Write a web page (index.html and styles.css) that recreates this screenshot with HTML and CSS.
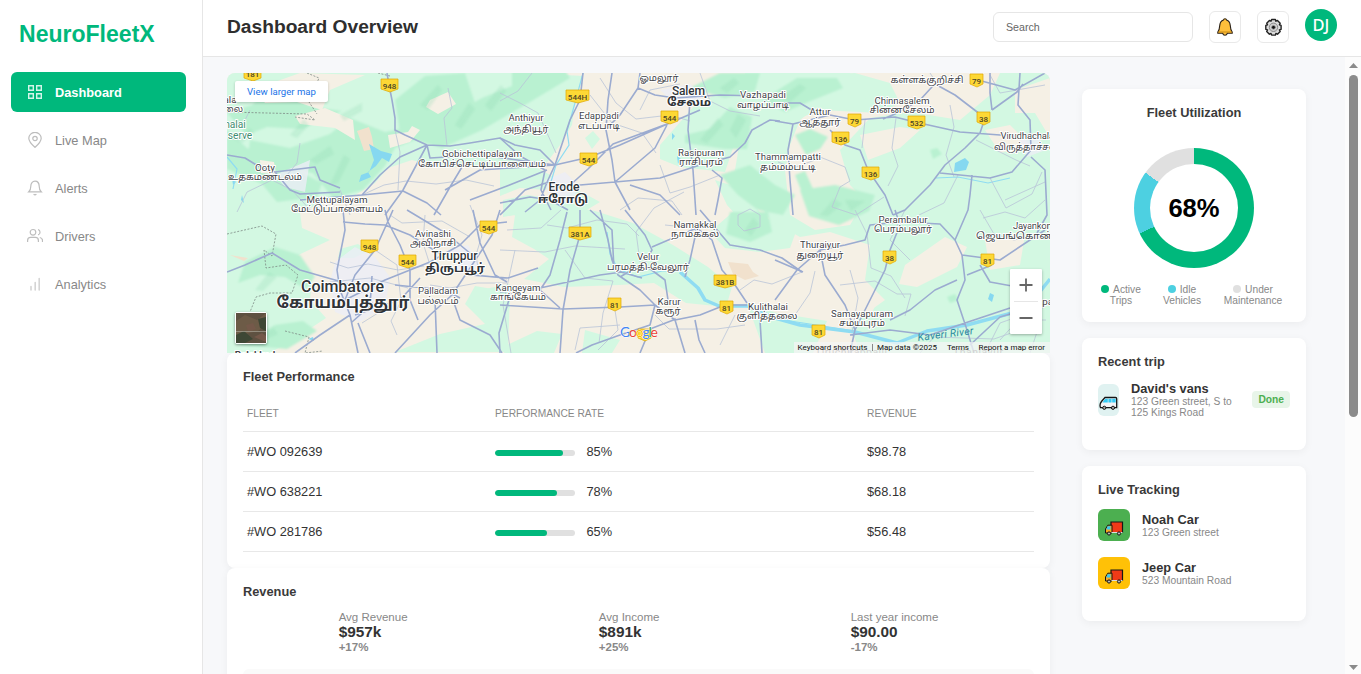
FILE: index.html
```html
<!DOCTYPE html>
<html lang="en">
<head>
<meta charset="utf-8">
<title>NeuroFleetX</title>
<link rel="stylesheet" href="styles.css">
</head>
<body>
<div class="app">
  <aside class="sidebar">
    <div class="logo">NeuroFleetX</div>
    <nav class="menu">
      <a class="item active"><svg viewBox="0 0 16 16"><path d="M1.700 1.700h4.600v4.600H1.700zM9.700 1.700h4.600v4.600H9.700zM1.700 9.700h4.600v4.600H1.700zM9.700 9.700h4.600v4.600H9.700z"/></svg><span>Dashboard</span></a>
      <a class="item"><svg viewBox="0 0 16 16"><path d="M8 15.4C5.5 13.2 1.8 10 1.8 6.3a6.2 6 0 0 1 12.4 0C14.200 10 10.500 13.200 8 15.400z"/><circle cx="8" cy="6.500" r="2.200"/></svg><span>Live Map</span></a>
      <a class="item"><svg viewBox="0 0 16 16"><path d="M1.800 11.800c1.500-1.300 2-2.800 2-5.600C3.800 3.200 5.500 1.200 8 1.200s4.200 2 4.200 5c0 2.800.5 4.300 2 5.600zM6.600 14.200c.8.700 2 .7 2.800 0"/></svg><span>Alerts</span></a>
      <a class="item"><svg viewBox="0 0 16 16"><circle cx="6" cy="4.300" r="2.800"/><path d="M.6 14v-1.600c0-2 1.200-3 3-3h4.800c1.800 0 3 1 3 3V14M11 1.600c2.700.4 2.700 4.700 0 5.300M12.800 9.500c1.700.3 2.700 1.300 2.700 3V14"/></svg><span>Drivers</span></a>
      <a class="item faint"><svg viewBox="0 0 16 16"><path d="M4 10.500V14M8.200 6.500V14M12.200 2.500V14"/></svg><span>Analytics</span></a>
    </nav>
  </aside>
  <div class="main">
    <header class="topbar">
      <h1>Dashboard Overview</h1>
      <div class="search">Search</div>
      <div class="tool"><svg width="18" height="20" viewBox="0 0 18 20"><path d="M9 1.700c.9 0 1.400.5 1.500 1.200 2.400.8 3.500 2.500 3.700 5.200.2 3.200.4 5 2 6.900v1.300H11.300c-.3 1.200-1.100 1.900-2.300 1.900s-2-.7-2.300-1.900H1.800V15c1.600-1.900 1.800-3.700 2-6.900.2-2.700 1.300-4.400 3.700-5.200.1-.7.600-1.200 1.500-1.200z" fill="#ffbf3b" stroke="#2b2118" stroke-width="1.100"/><path d="M2.500 15h13" stroke="#c98a12"/></svg></div>
      <div class="tool"><svg width="19" height="19" viewBox="0 0 19 19"><path d="M7.600 1.500h3.800l.5 1.700 1.600-.7 2.700 2.700-.8 1.600 1.700.6v3.900l-1.700.6.8 1.600-2.700 2.700-1.600-.8-.5 1.700H7.600l-.6-1.700-1.600.8-2.700-2.700.8-1.600-1.700-.6V7.400l1.700-.6-.8-1.600 2.700-2.700 1.600.7z" fill="#dcdcdc" stroke="#222" stroke-width="1.400" stroke-linejoin="round"/><circle cx="9.500" cy="9.300" r="4.200" fill="#d0d0d0" stroke="#8a8a8a"/><circle cx="9.500" cy="9.300" r="1.900" fill="#111" stroke="#999" stroke-width=".7"/></svg></div>
      <div class="avatar">DJ</div>
    </header>
    <div class="body">
      <div class="content">
        <section class="left">
          <div class="map">
            <svg class="mapart" viewBox="227 73 823 280">
              <defs><filter id="soft"><feGaussianBlur stdDeviation="1.300"/></filter></defs>
              <rect x="227" y="73" width="823" height="280" fill="#f5f0e5"/>
              <g class="g1">
                <path d="M227 73H530L583 76L575 100L572 125L560 145L545 165L507 168L470 166L440 168L412 160L388 168L375 183L355 195L330 200L300 212L302 228L330 240L292 258L312 280L310 300L326 318L305 332L270 353H227z"/>
                <path d="M500 168l30-4 22 12-6 14-26-2-20 8zM503 200l25-5 25 4 25-9 22 12-20 12-42-3-35 6zM515 215l40-12 40 8 38 12 40 22 35 22 24 20-6 20-40-4-32-20-35 2-55 2-40-8 25-20-15-10-22-12zM395 352l45-18 45-10-20-20 10-18 35 6-2 60zM480 290l30-6v24l-24 8zM507 345l30-14 25 3-8 19h-50zM585 330l35 10-8 13h-30zM660 145l35-40 50-25 110-7 35 10 10 20-20 10-60-3-30 12-50 5-15 45-45-5-20-8zM710 232l25-22 28 8 35 8-8 22-30 4-35-4zM765 353l-18-50 30 10 50 8-14 32zM715 180l30 10 20 30-20 5-18-20z"/>
                <path d="M745 73H850L870 95L850 110L815 108L800 120L790 145L785 170L790 215L815 230L850 225L865 200L850 185L840 150L870 118L910 112L960 120L990 95L1000 73H1050V353H860L850 325L885 300L865 280L870 245L830 232L800 237L770 220L755 195L735 170L740 140L755 120z"/>
                <path d="M340 249l18-5 10 7-14 7-16 0zM585 138l8-7 7 8-8 10zM610 245l50-5 15 20-30 12-35-8z"/>
              </g>
              <g class="g2" filter="url(#soft)">
                <path d="M250 140l40 8 40-14 20-16 35 14 30-6 35-10 32-18 30-12 0-20 50 0 8 12-40 24-48 28-40 18-27-8-20 8-10 18-22 24-30 8-20-25-35-6-30-10zM227 113l25-8 20-18 40 20 30 4-40 18-35-2-20 8zM395 100l30-24 40-3 10 30-35 22-40 8zM227 130l20 18 35 15 40 20-5 14-40 5-15-18-35-15z"/>
                <path d="M245 262l30-15 25 8 15 22-10 12-20-12-25-2-22 8zM240 345l35-20 28-4 14 10-30 18z"/>
                <path d="M685 135l25-6 20-22 22 10-5 32-22 0-40-6zM690 88l30-15h40l-5 18-30 7zM720 175l30-10 25 20 20 10-12 20-25-5-20-15zM730 212h38l4 20-22 10-24-8zM762 100l35-22 40 0 6 10-30 12-28 12zM795 135l15-6 18 8-8 12-14 6zM800 190l35-5 40 10-6 16-30 14-30-9zM795 175l10-4 8 18-10 6zM930 150l7-2 5 6-9 5zM947 297l8-3 4 6-9 3z"/>
              </g>
              <g class="g0">
                <path d="M300 73l65 2-35 15-8 20-25-8-32 1-10-14zM295 116l30-8 28 12 2 20-20-12-35-4zM430 100l18-8 8 12-18 10-12-7zM388 135l20-3 4-6 8 4-10 12-20 6zM260 160l14 2 2 12-15-1zM860 135l40-8 20 3-20 18-32 12zM985 130l25-5 20 20-30 8zM1015 90l35-12v60l-15-25-20 0zM905 265l40-28 22 10-10 20-40 20-18-3zM985 240l40-5-5 30-30 5zM860 290l20 5-10 22-20-2zM775 258l20 15-15 45-5-10z"/>
              </g>
              <g class="sand"><path d="M357 131l12-4 3 10 2 12-10 2-4-12zM728 262l20 2 5 8 6 4-14 4-12-6zM230 255l18 3-4 3z"/></g>
              <g class="shade" filter="url(#soft)"><path d="M235 140l15-12 4 5-12 10zM290 135l14-16 5 6-12 13zM310 160l20-14 4 8-18 10zM340 115l22-12 0 8-18 10zM420 105l18-20 4 5-14 20zM455 125l14-22 6 6-14 20zM485 105l16-20 5 6-15 20zM700 140l18-22 5 7-16 18zM730 130l8-16 8 6-10 18zM720 88l14-10 5 5-12 10zM250 340l24-12 4 6-22 10zM780 98l20-14 6 4-16 14zM820 215l14-16 8 5-14 12zM845 200l20 1-14 10zM745 230l8-12 6 6-8 12zM255 290l14-18 8 5-14 14zM330 185l14-30 6 4-12 24z"/></g>
              <g class="city"><path d="M335 262l20-15 20 10 15 20-5 30-25 15-25-10-5-30zM545 180l20-8 15 15-10 15-20 0zM660 90l30-6 15 12-25 12zM448 250l20-5 12 20-20 10zM310 160l-35 15 10 12 20 5zM1020 140l20-3 3 14-16 6z"/></g>
              <g class="water"><path d="M369 144l12 7 11 3-3 8-7-4-6 8-8 6 3 5-12 5 2-7 8-3 5-12zM955 163l10-5 4 4-3 8-12 2zM990 293l4 2-2 7-4-3zM232 178l4 4-3 3zM242 195l2 8-3-3zM308 339l5-2 1 4zM672 133l3 3-3 4zM677 156l4 3-3 5z"/>
                <path class="river" d="M680 272l18 16 7 12 14 6 28 0 28 12 25 7 55 7 42 11 30-12 40-6 45-12 22-14 16-20"/>
                <path class="stream" d="M583 73l-8 30-8 28 2 14-13 20-6 20M607 232l3 22 8 15 20 8 24-6 20 0M760 313l30 8 65 10M1010 178l-22 5-30-6-22 1M227 157l10 12-4 20"/>
              </g>
              <g class="thin">
                <path d="M245 120l5-10M300 143l-3 20-10 12M237 212l10-20 25-12 20 10 20 22M395 130l5 22-2 38M447 146l-3-28 8-10-4-20M362 195l22-10 22-4 30 3 30-4 28 6M340 190l10 25M390 215l12 8 40-2 28 16M470 205l12 30-6 20 3 20 28 4M375 250l22 15 4 36-10 20 6 14M330 262l18 6 20-4 30 6 26-4M330 282l40-4 38 10M350 285l16 6 12 22-16 10M330 305l40 2 20-4M425 215l-2 28 8 25M430 285l20 3 27-5 30 0M500 250l45 2 30-6 50 3M515 250l-12 55 8 48M507 230l34-2 20-18M547 225l20 3 30-8 30 4 12 12M500 93l20 10 18 10 18 40M532 73l-14 18-18 10M590 95l22 28 30 10 14 20M600 78l16 25 20 16 34-4 20 6M640 110l10-20 30-6M660 165l10 28 20-6 30-12M700 73l10 28 20 10 30 5M620 210l18-12 34 3 10 14M640 262l-4-30 18-24 30-16M565 250l20 28 28 3-10 32-4 30M615 310l3 20-20 20M655 315l14 14 48 0 28-4M575 350l5-22 40-3M720 345l15-30M665 225l20 2 25 7M740 290l14-10 18 4 30-12M795 315l15-22 5-22M815 160l-22 8-15-6M815 155l30 12 5 14-10 6-8 20 24 8 28-18M896 118l-4 30 6 18-10 20M865 120l-3 28M950 105l4 22-8 28 8 22M976 140l40 20 14 6M958 175l-14 28-25 12M990 178l16 30 26-14 10-22M930 73l8 12M855 210l12 24 4 34 20 8 14 22M840 285l35-4 22 13 14 0-6 22M850 270l8 28-6 34M905 210l-15 30 20 20M980 210l14 24 20 6 30-6M990 75l10 18 45-8M1005 200l40-18M985 353l15-30 45-16M920 353l14-16 60 2 40-14M1000 340l18-20 28 0M1030 353l10-30M1045 200l-20 18-20-6-22 6"/>
                <path class="dash" d="M227 112l80 2 8 6-20-3M307 73l12 5-10 24 8 12M227 234l35-8 14 8-4 22-8-6 2 18 20-3 12 10-6 18-22 0-14 4-10 25-6 8M285 331l24 6-4 16 18-2M378 73l12 3"/>
                <path d="M738 215l12-6 10 6 0 12-16 4-6-6z"/>
              </g>
              <g class="road">
                <path d="M387 73l2 12 3 15 3 18v12l10 5 22 10 23 1 20-3 30-5 15 7 25 5 15 15M427 145l-27 12-20 18-18 20M427 145l-24 45-18 25M427 145l3 13 50-3 60 8 15 2M300 200l62-5 41-4 24 12 14 12M227 155l18 3 13 8 17 6 40-5 5 13 20 8M275 172l15 18 10 4 40-2M434 215l16-28 12-20M445 190l35-20 75-5M470 200l37-14 40-16"/>
                <path d="M583 73l-3 27-10 20-10 30-5 15-7 15-8 20-15 12M612 73l-4 27-2 30 6 30 3 22 15 28M500 203l30-6 20 3 18 10M640 73l-2 15-18 27-15 15M638 88l17 7 20 3 45-3 40 1M690 100l-2 30 5 40 3 45M555 165l35-8 30-12 45-20 35-15M667 125l-12 23-40 34-35 3-30 3M568 187l20-18 25-25 54-20M615 182l45-4 40-13 30-8 15-14 7-13 18-10 10 1M630 185l30 10 20 20M712 170l10 8-4 22-3 15M500 138l20 18 25 14-4 20 10 20M500 215l25-25 24-8"/>
                <path d="M775 121l18 3 37-9 25 5 40-3 20 5 45 10 40 3 15 1M793 124l-5 26 2 30 3 35M830 130l15 15 15 5 8 20 17 25 8 20M775 103l25 0 15 9M942 76l-22 24-25 14-12 5M935 84l20 11 30 23-5 15-15 15-20 17-15 20-25 25-12 5M990 73v20l2 17M978 80l37 10 30-17M1020 73l-2 32 12 15 1 30-19 22-22 6-50-5M972 175l-2 20-2 15-13 30M1031 157l14 13 2 45-10 18M992 110l25-18 6-8"/>
                <path d="M343 210l2 20-8 40 3 20 10 25 8 38M227 272l18-7 27-12 28 17 35 10 15 5M393 210l-18 40-20 25-10 25M343 222l22 2 20 1 25 10 35 22M385 210l3 12 12 23 10 25v30l8 20M345 300l40-20 45-18 30-17 20-20 27-3M395 353l35-38 22-20 20-30 20-30 8-25M350 315l-30 20-25 18M355 315l45-15 20-22M473 210l7 33 15 32 12 7M435 300l2 53M453 300l7 20 30 15 12 18M395 285l50 5 15 8M407 210l40 24 24 20M470 275l38 3 30-10M352 322l18-16 2-30M370 353l-12-30"/>
                <path d="M580 210v25l-10 35-7 40-3 43M500 292l40-4 60-13 22-3M600 210l8 30 4 20 6 15 22 15 15 15M590 210l22 20 2 40 28 8M625 210l20 25 7 15-7 12-25 15M652 247l28-12 17-7 15 12 10 30 13 15 12 18M500 305l63 4 57-2 35-2M655 305l-5 20-30 10-28 10-16 8M655 305l20 15 25-5 25-10 22 0M567 212l-7 28-10 35-10 15 20 18M645 265l20 15 3 20M697 228l-7 32-5 17M700 210l30 35 30 5 22 8 20 14M695 320l4 20 6 13M760 320l2 33M675 320l10 33M640 353l10-24 26-10M500 353l-1-20 12-40"/>
                <path d="M895 210l5 15-10 25-5 20-15 30-15 30-5 23M775 300l22-30 23-20 25-5 20-5 5-15 30-3 40 2 15 16 7 15 3 25-8 20 10 30 7 23M962 255l38 5 30-20 15-10M820 250l5 25 20 30 10 25M957 280l-22 10-25 20-20 10M850 335l40-5 40 5 35-12 45-15M980 265l10 17 22 4M775 260l28 12M967 275l25-10M970 345l30-28 20-6"/>
              </g>
              <g class="shield">
                <path d="M244 69h17v9l-8 3-9-3zM381 79h17v10l-8 3-9-3zM566 90h23v10l-11 3-12-3zM661 111h17v10l-8 3-9-3zM580 153h17v10l-8 3-9-3zM480 221h17v10l-8 3-9-3zM399 255h17v10l-8 3-9-3zM361 240h17v10l-8 3-9-3zM569 227h22v10l-11 3-11-3zM608 298h13v10l-6 3-7-3zM714 275h22v10l-11 3-11-3zM720 301h13v10l-6 3-7-3zM638 329h13v9l-6 3-7-3zM812 325h13v10l-6 3-7-3zM883 251h13v10l-6 3-7-3zM981 254h13v10l-6 3-7-3zM862 167h17v10l-8 3-9-3zM832 132h17v10l-8 3-9-3zM848 114h13v10l-6 3-7-3zM908 116h17v10l-8 3-9-3zM977 112h13v10l-6 3-7-3zM970 74h13v10l-6 3-7-3z"/>
              </g>
              <g class="num">
                <text x="252.500" y="76.500">181</text><text x="389.500" y="88.500">948</text><text x="577.500" y="99.500">544H</text><text x="669.500" y="120.500">544</text><text x="588.500" y="162.500">544</text><text x="488.500" y="230.500">544</text><text x="407.500" y="264.500">544</text><text x="369.500" y="249.500">948</text><text x="580" y="236.500">381A</text><text x="614.500" y="307.500">81</text><text x="725" y="284.500">381B</text><text x="726.500" y="310.500">81</text><text x="818.500" y="334.500">81</text><text x="889.500" y="260.500">38</text><text x="987.500" y="263.500">81</text><text x="870.500" y="176.500">136</text><text x="840.500" y="141.500">136</text><text x="854.500" y="123.500">79</text><text x="916.500" y="125.500">532</text><text x="983.500" y="121.500">38</text><text x="976.500" y="83.500">79</text>
              </g>
              <g class="town">
                <text x="526" y="121" textLength="35">Anthiyur</text><text x="599" y="119" textLength="40">Edappadi</text><text x="482" y="157" textLength="80">Gobichettipalayam</text><text x="265" y="171" textLength="20">Ooty</text><text x="337" y="203" textLength="61">Mettupalayam</text><text x="763" y="98" textLength="46">Vazhapadi</text><text x="701" y="156" textLength="46">Rasipuram</text><text x="788" y="160" textLength="66">Thammampatti</text><text x="820" y="115" textLength="21">Attur</text><text x="902" y="104" textLength="55">Chinnasalem</text><text class="start" x="1000.500" y="139" textLength="62">Virudhachalam</text><text x="433" y="237" textLength="36">Avinashi</text><text x="438" y="294" textLength="40">Palladam</text><text x="518" y="291" textLength="45">Kangeyam</text><text x="695" y="228" textLength="43">Namakkal</text><text x="648" y="260" textLength="22">Velur</text><text x="669" y="305" textLength="23">Karur</text><text x="768" y="310" textLength="40">Kulithalai</text><text x="903" y="223" textLength="49">Perambalur</text><text x="820" y="248" textLength="40">Thuraiyur</text><text class="start" x="1013" y="229" textLength="57">Jayankondam</text><text x="862" y="317" textLength="62">Samayapuram</text><text x="1045" y="305">apa</text><text x="230" y="103">ala</text>
              </g>
              <g class="tamil">
                <text x="526" y="132" textLength="45" lengthAdjust="spacingAndGlyphs">அந்தியூர்</text><text x="599" y="129" textLength="42" lengthAdjust="spacingAndGlyphs">எடப்பாடி</text><text x="482" y="167" textLength="128" lengthAdjust="spacingAndGlyphs">கோபிச்செட்டிப்பாளையம்</text><text x="265" y="180" textLength="74" lengthAdjust="spacingAndGlyphs">உதகமண்டலம்</text><text x="337" y="212" textLength="92" lengthAdjust="spacingAndGlyphs">மேட்டுப்பாளையம்</text><text x="763" y="108" textLength="52" lengthAdjust="spacingAndGlyphs">வாழப்பாடி</text><text x="701" y="165" textLength="44" lengthAdjust="spacingAndGlyphs">ராசிபுரம்</text><text x="788" y="170" textLength="56" lengthAdjust="spacingAndGlyphs">தம்மம்பட்டி</text><text x="820" y="125" textLength="41" lengthAdjust="spacingAndGlyphs">ஆத்தூர்</text><text x="902" y="113" textLength="65" lengthAdjust="spacingAndGlyphs">சின்னசேலம்</text><text x="1030" y="150" textLength="72" lengthAdjust="spacingAndGlyphs">விருத்தாச்சலம்</text><text x="433" y="246" textLength="46" lengthAdjust="spacingAndGlyphs">அவிநாசி</text><text x="438" y="304" textLength="41" lengthAdjust="spacingAndGlyphs">பல்லடம்</text><text x="518" y="300" textLength="56" lengthAdjust="spacingAndGlyphs">காங்கேயம்</text><text x="695" y="237" textLength="48" lengthAdjust="spacingAndGlyphs">நாமக்கல்</text><text x="648" y="270" textLength="82" lengthAdjust="spacingAndGlyphs">பரமத்தி-வேலூர்</text><text x="668" y="314" textLength="25" lengthAdjust="spacingAndGlyphs">கரூர்</text><text x="767" y="319" textLength="61" lengthAdjust="spacingAndGlyphs">குளித்தலை</text><text x="903" y="232" textLength="58" lengthAdjust="spacingAndGlyphs">பெரம்பலூர்</text><text x="820" y="258" textLength="47" lengthAdjust="spacingAndGlyphs">துறையூர்</text><text x="1024" y="239" textLength="96" lengthAdjust="spacingAndGlyphs">ஜெயங்கொண்டம்</text><text x="862" y="326" textLength="46" lengthAdjust="spacingAndGlyphs">சமயபுரம்</text><text x="659" y="81" textLength="39" lengthAdjust="spacingAndGlyphs">ஓமலூர்</text><text x="927" y="83" textLength="73" lengthAdjust="spacingAndGlyphs">கள்ளக்குறிச்சி</text><text x="233" y="112">லை</text>
              </g>
              <g class="cityname">
                <text x="688.500" y="94.500" textLength="33">Salem</text><text x="564" y="191" textLength="31">Erode</text><text x="454.500" y="260" textLength="46">Tiruppur</text><text class="big" x="342.500" y="292" textLength="83">Coimbatore</text>
                <text class="ta" x="689" y="106" textLength="44" lengthAdjust="spacingAndGlyphs">சேலம்</text><text class="ta" x="563" y="203" textLength="50" lengthAdjust="spacingAndGlyphs">ஈரோடு</text><text class="ta" x="455" y="272" textLength="60" lengthAdjust="spacingAndGlyphs">திருப்பூர்</text><text class="ta bigta" x="343" y="308" textLength="133" lengthAdjust="spacingAndGlyphs">கோயம்புத்தூர்</text>
              </g>
              <g class="park"><text x="235" y="127.500">nalai</text><text x="240" y="138.500">serve</text><text class="rivername" transform="rotate(-7 918 340)" x="946" y="341" textLength="56">Kaveri River</text></g>
              <g class="town"><text x="255" y="358" font-weight="700">Palakkad</text></g>
              <g class="under"><text x="851" y="356" textLength="72">Tiruchirappalli</text><text x="978" y="356" textLength="50">Thanjavur</text></g>
              <rect x="794" y="342" width="256" height="11" fill="#f5f5f5" opacity=".72"/>
              <g class="terms"><text x="797.500" y="350" textLength="70">Keyboard shortcuts</text><text x="877" y="350" textLength="60">Map data ©2025</text><text x="947" y="350" textLength="22">Terms</text><text x="978.500" y="350" textLength="66.500">Report a map error</text></g>
              <path d="M872.500 344v7" stroke="#888"/>
              <text class="google" x="620" y="336.500" textLength="38"><tspan fill="#4285f4">G</tspan><tspan fill="#ea4335">o</tspan><tspan fill="#fbbc05">o</tspan><tspan fill="#4285f4">g</tspan><tspan fill="#34a853">l</tspan><tspan fill="#ea4335">e</tspan></text>
            </svg>
            <div class="larger">View larger map</div>
            <div class="satellite"><svg viewBox="0 0 30 30"><rect width="30" height="30" fill="#5e5141"/><path d="M0 8l9-6 12 5 9-7v12l-8 6-9 2-13 3z" fill="#6d5b47"/><path d="M22 6l8-2v14l-6-3zM0 22l8-4 9 8-8 4H0z" fill="#3e4735"/><path d="M10 12l7-2 3 6-8 3zM18 24l8-4 4 3v6z" fill="#75594a"/><path d="M0 18.500h30" stroke="#a6a496" stroke-width=".7"/></svg></div>
            <div class="zoombox"><svg viewBox="0 0 32 65"><path d="M16 9.500v13M9.500 16h13M9.500 49h13" stroke="#666" stroke-width="1.800"/><path d="M4 32.500h24" stroke="#e6e6e6"/></svg></div>
          </div>
          <div class="card perf">
            <h2>Fleet Performance</h2>
            <table>
              <thead><tr><th class="c1">FLEET</th><th class="c2">PERFORMANCE RATE</th><th>REVENUE</th></tr></thead>
              <tbody>
                <tr><td>#WO 092639</td><td><div class="rate"><div class="bar"><i style="width:85%"></i></div>85%</div></td><td>$98.78</td></tr>
                <tr><td>#WO 638221</td><td><div class="rate"><div class="bar"><i style="width:78%"></i></div>78%</div></td><td>$68.18</td></tr>
                <tr><td>#WO 281786</td><td><div class="rate"><div class="bar"><i style="width:65%"></i></div>65%</div></td><td>$56.48</td></tr>
              </tbody>
            </table>
          </div>
          <div class="card revenue">
            <h2>Revenue</h2>
            <div class="stats">
              <div><span>Avg Revenue</span><strong>$957k</strong><em>+17%</em></div>
              <div><span>Avg Income</span><strong>$891k</strong><em>+25%</em></div>
              <div><span>Last year income</span><strong>$90.00</strong><em>-17%</em></div>
            </div>
            <div class="chart"></div>
          </div>
        </section>
        <section class="right">
          <div class="card util">
            <h2>Fleet Utilization</h2>
            <div class="donut"><div class="hole">68%</div></div>
            <div class="legend">
              <div class="k1"><i class="dot green"></i>Active Trips</div>
              <div class="k2"><i class="dot blue"></i>Idle Vehicles</div>
              <div class="k3"><i class="dot gray"></i>Under Maintenance</div>
            </div>
          </div>
          <div class="card trip">
            <h2>Recent trip</h2>
            <div class="entry">
              <div class="thumb van"><svg width="19" height="15" viewBox="0 0 19 15"><path d="M6 1.500h10.500c.8 0 1.200.4 1.200 1.200v9H1.500C.8 10 1.300 7 2.500 5.500z" fill="#f4f4f6" stroke="#161616" stroke-width="1.300"/><path d="M6.200 2.800h2.600v3.700H3.400zM9.400 2.800h3.200v3.700H9.400zM13.200 2.800h3.500v3.700h-3.500z" fill="#35cbf5"/><circle cx="5.300" cy="11.800" r="1.600" fill="#aaa" stroke="#161616"/><circle cx="14" cy="11.800" r="1.600" fill="#aaa" stroke="#161616"/></svg></div>
              <div class="info"><b>David's vans</b><small>123 Green street, S to<br>125 Kings Road</small></div>
              <span class="badge">Done</span>
            </div>
          </div>
          <div class="card track">
            <h2>Live Tracking</h2>
            <div class="entry">
              <div class="thumb t-green"><svg width="20" height="15" viewBox="0 0 20 15"><path d="M7 1h11.500v10.500H7z" fill="#f03a17" stroke="#161616" stroke-width="1.200"/><path d="M7 4.200H3.800L1.500 8v4H8V4.200z" fill="#f6a821" stroke="#161616"/><path d="M3.500 5.200h3v3.300H2.300z" fill="#39c9f3"/><path d="M7.500 11.500h11" stroke="#ddd"/><circle cx="5" cy="12.500" r="1.600" fill="#bbb" stroke="#161616"/><circle cx="15" cy="12.500" r="1.600" fill="#bbb" stroke="#161616"/></svg></div>
              <div class="info"><b>Noah Car</b><small>123 Green street</small></div>
            </div>
            <div class="entry">
              <div class="thumb t-amber"><svg width="20" height="15" viewBox="0 0 20 15"><path d="M7 1h11.500v10.500H7z" fill="#f03a17" stroke="#161616" stroke-width="1.200"/><path d="M7 4.200H3.800L1.500 8v4H8V4.200z" fill="#f6a821" stroke="#161616"/><path d="M3.500 5.200h3v3.300H2.300z" fill="#39c9f3"/><path d="M7.500 11.500h11" stroke="#ddd"/><circle cx="5" cy="12.500" r="1.600" fill="#bbb" stroke="#161616"/><circle cx="15" cy="12.500" r="1.600" fill="#bbb" stroke="#161616"/></svg></div>
              <div class="info"><b>Jeep Car</b><small>523 Mountain Road</small></div>
            </div>
          </div>
        </section>
      </div>
      <div class="scrollbar"><svg width="9" height="5" viewBox="0 0 9 5"><path d="M0 5L4.500 0L9 5z"/></svg><div class="handle"></div><svg class="down" width="9" height="5" viewBox="0 0 9 5"><path d="M0 0h9L4.500 5z"/></svg></div>
    </div>
  </div>
</div>
</body>
</html>
```
FILE: styles.css
```css
* { box-sizing: border-box; }
body { margin: 0; font: 12.8px/1.15 "Liberation Sans", Arial, sans-serif; color: #333; background: #fff; }
h1, h2 { margin: 0; }
.app { display: flex; width: 1361px; height: 674px; overflow: hidden; }
.sidebar { width: 203px; flex: none; border-right: 1px solid #e6e6e6; padding: 20px 16px 0 11px; }
.logo { font-size: 23.04px; font-weight: 700; color: #00b87c; line-height: 28px; padding-left: 8px; height: 52px; }
.menu { display: flex; flex-direction: column; gap: 8px; }
.item { display: flex; align-items: center; gap: 12px; height: 40px; padding-left: 16px; border-radius: 6px; color: #888; }
.item span { padding-top: 2px; }
.item svg { width: 16px; height: 16px; fill: none; stroke: #bdbdbd; stroke-width: 1.2; }
.item.faint svg { stroke: #d4d4d4; stroke-width: 1.6; stroke-linecap: round; }
.item.active { background: #00b87c; color: #fff; font-weight: 700; }
.item.active svg { stroke: #d5f5e9; stroke-width: 1.4; }
.main { flex: 1; display: flex; flex-direction: column; min-width: 0; }
.topbar { display: flex; height: 57px; flex: none; border-bottom: 1px solid #e6e6e6; padding: 9px 24px 0; }
.topbar h1 { font-size: 19.2px; line-height: 35px; flex: 1; color: #2e2e2e; }
.search { width: 200px; height: 30px; margin-top: 3px; border: 1px solid #e6e6e6; border-radius: 6px; padding-left: 12px; font-size: 10.67px; line-height: 28px; color: #666; }
.tool { width: 32px; height: 32px; margin: 2px 0 0 16px; border: 1px solid #e9e9e9; border-radius: 6px; display: flex; align-items: center; justify-content: center; }
.avatar { width: 32px; height: 32px; margin-left: 16px; border-radius: 50%; background: #00b87c; color: #fff; text-align: center; font: 500 16.5px/32px "Noto Sans", "Open Sans", sans-serif; }
.body { flex: 1; display: flex; min-height: 0; background: #f7f8fa; }
.content { flex: 1; display: flex; padding: 16px 39px 0 24px; gap: 32px; overflow: hidden; }
.left { width: 823px; flex: none; }
.right { width: 224px; flex: none; padding-top: 16px; display: flex; flex-direction: column; gap: 16px; }
.card { background: #fff; border-radius: 8px; padding: 16px; box-shadow: 0 2px 8px rgba(0,0,0,.05); }
.card h2 { font-size: 12.8px; line-height: 15px; color: #3a3a3a; }
.perf { height: 215px; }
table { width: 100%; border-collapse: collapse; table-layout: fixed; margin-top: 12px; }
th { height: 35px; padding: 1px 4px 0; font-size: 10.24px; font-weight: 400; color: #888; text-align: left; border-bottom: 1px solid #e8e8e8; }
td { height: 40px; padding: 2px 4px 0; border-bottom: 1px solid #e8e8e8; }
.c1 { width: 248px; }
.c2 { width: 372px; }
.rate { display: flex; align-items: center; gap: 11.5px; }
.bar { width: 80px; height: 6px; margin-top: 2px; background: #e0e0e0; border-radius: 3px; overflow: hidden; }
.bar i { display: block; height: 6px; background: #00b87c; border-radius: 3px; }
.revenue { height: 220px; }
.stats { display: flex; justify-content: space-around; margin-top: 11px; }
.stats div { display: flex; flex-direction: column; }
.stats span { font-size: 11.52px; line-height: 13px; padding-top: 1px; height: 13px; color: #888; }
.stats strong { font-size: 15.36px; line-height: 17px; }
.stats em { font-size: 11.52px; line-height: 14px; font-weight: 700; font-style: normal; color: #888; }
.chart { height: 100px; margin-top: 15px; border-radius: 6px; background: #fafafa; }
.util { height: 233px; }
.util h2 { text-align: center; }
.donut { width: 120px; height: 120px; margin: 28px auto 0; border-radius: 50%; background: conic-gradient(#00b87c 0 68%, #4dd0e1 68% 85%, #e0e0e0 85%); padding: 16px; }
.hole { height: 88px; border-radius: 50%; background: #fff; color: #000; font-size: 25.6px; font-weight: 700; line-height: 88px; text-align: center; }
.legend { display: flex; justify-content: space-between; margin-top: 16px; padding: 0 7px 0 3px; font-size: 10.24px; line-height: 11px; color: #888; text-align: center; }
.k1 { width: 40px; }
.k2 { width: 40px; }
.k3 { width: 60px; }
.dot { display: inline-block; width: 8px; height: 8px; border-radius: 50%; margin-right: 4px; }
.green { background: #00b87c; }
.blue { background: #4dd0e1; }
.gray { background: #e0e0e0; }
.trip { height: 112px; }
.track { height: 155px; }
.entry { display: flex; align-items: center; margin-top: 13px; }
.track .entry { height: 32px; margin-top: 12px; }
.track .entry + .entry { margin-top: 16px; }
.thumb { width: 32px; height: 32px; flex: none; border-radius: 6px; margin-right: 12px; display: flex; align-items: center; justify-content: center; padding-top: 6px; }
.van { width: 21px; background: #e0f2f1; }
.t-green { background: #4caf50; }
.t-amber { background: #ffc107; }
.info { flex: 1; }
.info b { display: block; line-height: 14px; }
.info small { display: block; font-size: 10.24px; line-height: 11px; color: #888; white-space: nowrap; }
.badge { background: #e8f5e9; color: #4caf50; font-size: 10.24px; font-weight: 700; line-height: 17px; padding: 0 6px; border-radius: 4px; margin-top: -2px; }
.scrollbar { width: 16px; flex: none; background: #fcfcfc; display: flex; flex-direction: column; align-items: center; padding: 6px 0 4px; }
.scrollbar path { fill: #8b8b8b; }
.handle { width: 9px; height: 342px; margin-top: 7px; border-radius: 5px; background: #8b8b8b; }
.down { margin-top: auto; }

.map { position: relative; height: 280px; overflow: hidden; border-radius: 8px 8px 0 0; }
.mapart { display: block; width: 823px; height: 280px; }
.g1 { fill: #d3f8e2; }
.g2 { fill: #b9f1d1; }
.g0 { fill: #f5f0e5; }
.sand { fill: #f1e1cd; }
.shade { fill: #8fd9b2; opacity: .25; }
.city { fill: #eceef6; opacity: .8; }
.water { fill: #86d8f0; }
.river { fill: none; stroke: #8fdcf2; stroke-width: 3.5; stroke-linejoin: round; }
.stream { fill: none; stroke: #8fdcf2; stroke-width: 1.2; }
.thin { fill: none; stroke: #b9c4d8; stroke-width: .8; stroke-linejoin: round; }
.dash { stroke: #7d8a85; stroke-dasharray: 2 1.5; }
.road { fill: none; stroke: #9babd0; stroke-width: 1.6; stroke-linejoin: round; }
.shield { fill: #fdd835; stroke: #e0a800; stroke-width: .7; }
.mapart text { font-family: Roboto, "Noto Sans Tamil", "Noto Sans", sans-serif; text-anchor: middle; }
.mapart .start { text-anchor: start; }
.num text { font-size: 8px; font-weight: 500; fill: #4c4526; }
.town text, .tamil text, .cityname text, .park text { paint-order: stroke; stroke: #fff; stroke-width: 2px; stroke-linejoin: round; }
.town text { font-size: 9.8px; fill: #3f4347; }
.tamil text { font-size: 9.2px; fill: #3f4347; }
.cityname text { font-size: 12.2px; font-weight: 500; fill: #303438; }
.cityname .big { font-size: 16px; }
.cityname .ta { font-size: 11.5px; font-weight: 700; }
.cityname .bigta { font-size: 16px; }
.park text { font-size: 10.2px; fill: #3f8f72; }
.park .rivername { font-size: 10.5px; fill: #2b8ba0; font-style: italic; stroke: none; }
.under text { font-size: 10.5px; fill: #777; }
.mapart .terms text { font-size: 8px; fill: #111; text-anchor: start; }
.mapart .google { font-family: Lato, sans-serif; font-size: 14px; text-anchor: start; paint-order: stroke; stroke: #fff; stroke-width: .8px; }
.larger { position: absolute; left: 8px; top: 8px; width: 93px; height: 21px; background: #fff; border-radius: 2px; box-shadow: 0 1px 3px rgba(0,0,0,.2); color: #1a73e8; font: 9.6px/21px Roboto, sans-serif; text-align: center; }
.satellite { position: absolute; left: 8px; top: 239px; width: 32px; height: 32px; border: 1px solid #fff; border-radius: 2px; box-shadow: 0 1px 3px rgba(0,0,0,.4); }
.satellite svg { display: block; }
.zoombox { position: absolute; left: 783px; top: 196px; width: 32px; height: 65px; background: #fff; border-radius: 1px; box-shadow: 0 1px 3px rgba(0,0,0,.3); }
```
